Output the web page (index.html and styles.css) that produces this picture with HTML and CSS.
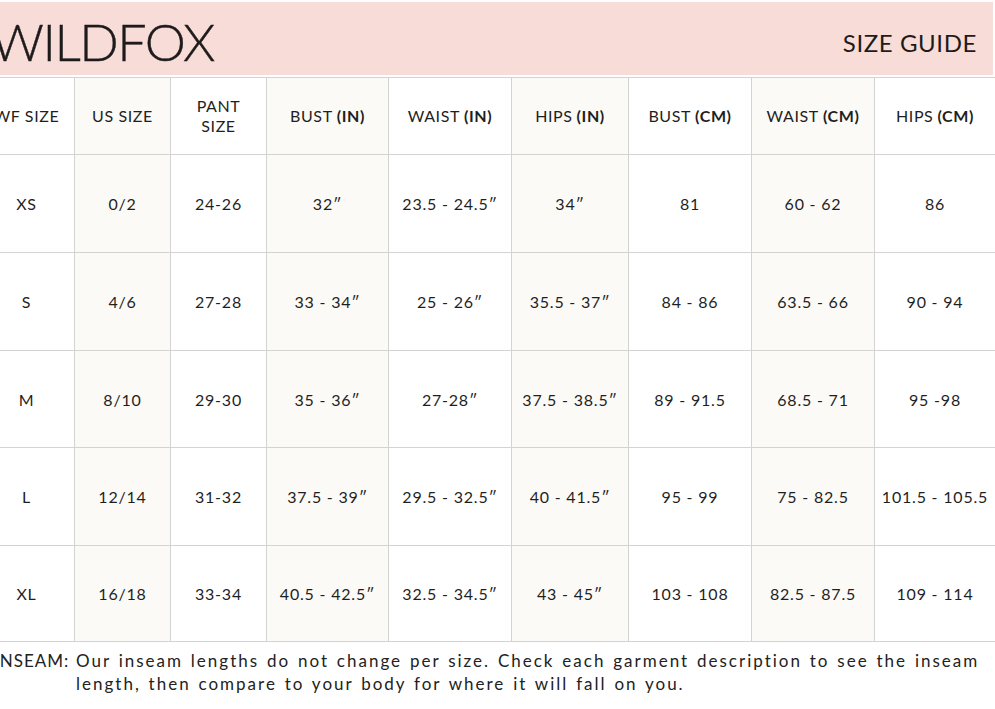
FILE: index.html
```html
<!DOCTYPE html>
<html>
<head>
<meta charset="utf-8">
<link rel="stylesheet" href="styles.css">
</head>
<body>
<div class="page">
  <header class="banner">
    <div class="logo">WILDFOX</div>
    <div class="title">SIZE GUIDE</div>
  </header>
  <div class="chart">
    <div class="cell head">WF SIZE</div>
    <div class="cell head tint">US SIZE</div>
    <div class="cell head">PANT<br>SIZE</div>
    <div class="cell head tint">BUST <b>(IN)</b></div>
    <div class="cell head">WAIST <b>(IN)</b></div>
    <div class="cell head tint">HIPS <b>(IN)</b></div>
    <div class="cell head">BUST <b>(CM)</b></div>
    <div class="cell head tint">WAIST <b>(CM)</b></div>
    <div class="cell head last">HIPS <b>(CM)</b></div>

    <div class="cell">XS</div>
    <div class="cell tint">0/2</div>
    <div class="cell">24-26</div>
    <div class="cell tint">32&Prime;</div>
    <div class="cell">23.5 - 24.5&Prime;</div>
    <div class="cell tint">34&Prime;</div>
    <div class="cell">81</div>
    <div class="cell tint">60 - 62</div>
    <div class="cell last">86</div>

    <div class="cell">S</div>
    <div class="cell tint">4/6</div>
    <div class="cell">27-28</div>
    <div class="cell tint">33 - 34&Prime;</div>
    <div class="cell">25 - 26&Prime;</div>
    <div class="cell tint">35.5 - 37&Prime;</div>
    <div class="cell">84 - 86</div>
    <div class="cell tint">63.5 - 66</div>
    <div class="cell last">90 - 94</div>

    <div class="cell">M</div>
    <div class="cell tint">8/10</div>
    <div class="cell">29-30</div>
    <div class="cell tint">35 - 36&Prime;</div>
    <div class="cell">27-28&Prime;</div>
    <div class="cell tint">37.5 - 38.5&Prime;</div>
    <div class="cell">89 - 91.5</div>
    <div class="cell tint">68.5 - 71</div>
    <div class="cell last">95 -98</div>

    <div class="cell">L</div>
    <div class="cell tint">12/14</div>
    <div class="cell">31-32</div>
    <div class="cell tint">37.5 - 39&Prime;</div>
    <div class="cell">29.5 - 32.5&Prime;</div>
    <div class="cell tint">40 - 41.5&Prime;</div>
    <div class="cell">95 - 99</div>
    <div class="cell tint">75 - 82.5</div>
    <div class="cell last">101.5 - 105.5</div>

    <div class="cell">XL</div>
    <div class="cell tint">16/18</div>
    <div class="cell">33-34</div>
    <div class="cell tint">40.5 - 42.5&Prime;</div>
    <div class="cell">32.5 - 34.5&Prime;</div>
    <div class="cell tint">43 - 45&Prime;</div>
    <div class="cell">103 - 108</div>
    <div class="cell tint">82.5 - 87.5</div>
    <div class="cell last">109 - 114</div>
  </div>
  <div class="note">
    <span class="note-label">INSEAM:</span>
    <p class="note-text">Our inseam lengths do not change per size. Check each garment description to see the inseam length, then compare to your body for where it will fall on you.</p>
  </div>
</div>
</body>
</html>
```

FILE: styles.css
```css
html, body {
  margin: 0;
  padding: 0;
  background: #ffffff;
  overflow: hidden;
}
body {
  width: 995px;
  height: 709px;
  font-family: "Lato", "DejaVu Sans", sans-serif;
  color: #1f1f1f;
}
.page {
  padding-top: 2px;
}
.banner {
  height: 73px;
  background: #f8dcd8;
  margin-right: 2px;
  display: flex;
  align-items: center;
  justify-content: space-between;
}
.logo {
  font-size: 52px;
  font-weight: 300;
  letter-spacing: -1.5px;
  margin-left: -9px;
  color: #1d1b1b;
  line-height: 1;
  padding-top: 4px;
  -webkit-text-stroke: 0.4px #1d1b1b;
}
.title {
  font-size: 24px;
  letter-spacing: 0.6px;
  margin-right: 16px;
  padding-top: 8px;
  color: #1d1b1b;
}
.chart {
  margin-top: 2px;
  margin-left: -21px;
  width: 1016px;
  display: grid;
  grid-template-columns: 96px 96px 96px 122px 123px 117px 123px 123px 120px;
  grid-template-rows: 77px 98px 98px 97px 98px 95px;
  border-top: 1px solid #d3d3d3;
  border-bottom: 1px solid #d3d3d3;
}
.cell {
  display: flex;
  align-items: center;
  justify-content: center;
  text-align: center;
  font-size: 16px;
  letter-spacing: 0.8px;
  border-right: 1.5px solid #d3d3d3;
  border-bottom: 1.5px solid #d3d3d3;
  box-sizing: border-box;
}
.cell.head {
  line-height: 20px;
  letter-spacing: 0.6px;
}
.cell.head b {
  font-weight: 700;
  margin-left: 4px;
}
.cell.last {
  border-right: none;
}
.chart > .cell:nth-last-child(-n+9) {
  border-bottom: none;
}
.tint {
  background: #fcfaf6;
}
.note {
  display: flex;
  margin-left: -6px;
  margin-top: 7px;
  font-size: 17px;
  letter-spacing: 2px;
  word-spacing: 1.5px;
  line-height: 23px;
  color: #222;
}
.note-label {
  flex: none;
  width: 82px;
  letter-spacing: 1px;
}
.note-text {
  margin: 0;
  width: 912px;
}
```
